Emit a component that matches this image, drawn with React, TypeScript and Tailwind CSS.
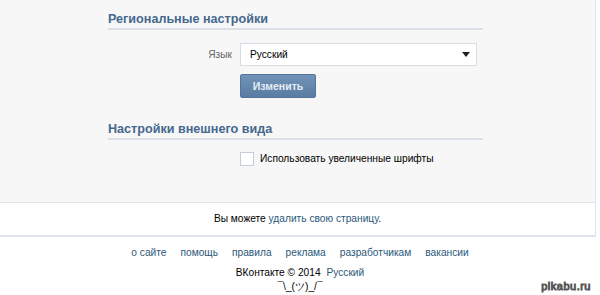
const footerLinks = ["о сайте", "помощь", "правила", "реклама", "разработчикам", "вакансии"];

function SectionTitle({ children }: { children: string }) {
  return (
    <div className="border-b-2 border-[#dae1e8] pb-[2px] text-[12.6px] font-bold leading-[14px] text-[#45688e]">{children}</div>
  );
}

export default function App() {
  return (
    <div className="relative h-[295px] w-[600px] overflow-hidden bg-white font-['Liberation_Sans',Arial,sans-serif] text-[10.2px] leading-[14px] text-[#000]">
      <div className="mr-[4px] border-b border-r border-[#dfe4ea] bg-[#f7f7f7]">
        <div className="pl-[108px] pr-[112px] pt-[12px]">
          <SectionTitle>Региональные настройки</SectionTitle>
          <div className="mt-[13px] flex items-center">
            <div className="w-[132px] pr-[8px] text-right text-[#666]">Язык</div>
            <div className="flex h-[23px] w-[237px] items-center justify-between border border-[#d7dde4] bg-white pl-[9px] pr-[6px]">
              <span>Русский</span>
              <svg width="8" height="5" viewBox="0 0 8 5"><path d="M0 0h8L4 5z" fill="#222" /></svg>
            </div>
          </div>
          <div className="mt-[8px] pl-[132px]">
            <button className="h-[24px] w-[76px] rounded-[2px] border border-[#52749a] bg-gradient-to-b from-[#7193b8] to-[#5a7ca2] text-[10.5px] font-bold text-[#e6edf4]">
              Изменить
            </button>
          </div>
          <div className="mt-[24px]">
            <SectionTitle>Настройки внешнего вида</SectionTitle>
          </div>
          <div className="mt-[12px] flex items-center pl-[132px]">
            <div className="h-[14px] w-[14px] border border-[#c5ced8] bg-white" />
            <span className="ml-[6px]">Использовать увеличенные шрифты</span>
          </div>
          <div className="h-[36px]" />
        </div>
      </div>
      <div className="mr-[4px] flex h-[34px] items-center justify-center border-b-2 border-r border-[#dfe4ea] bg-white">
        <span>
          Вы можете <span className="text-[#2b587a]">удалить свою страницу</span>.
        </span>
      </div>
      <div className="mt-[9px] flex justify-center gap-[14px] text-[#2b587a]">
        {footerLinks.map((l) => (
          <span key={l}>{l}</span>
        ))}
      </div>
      <div className="mt-[6px] text-center">
        ВКонтакте © 2014 <span className="ml-[3px] text-[#2b587a]">Русский</span>
      </div>
      <div className="mt-[1px] text-center leading-[12px]">¯\_(ツ)_/¯</div>
      <div
        className="absolute bottom-[2px] right-[9px] text-[11px] tracking-[0.5px] text-white"
        style={{ WebkitTextStroke: "1px #555" }}
      >
        pikabu.ru
      </div>
    </div>
  );
}
